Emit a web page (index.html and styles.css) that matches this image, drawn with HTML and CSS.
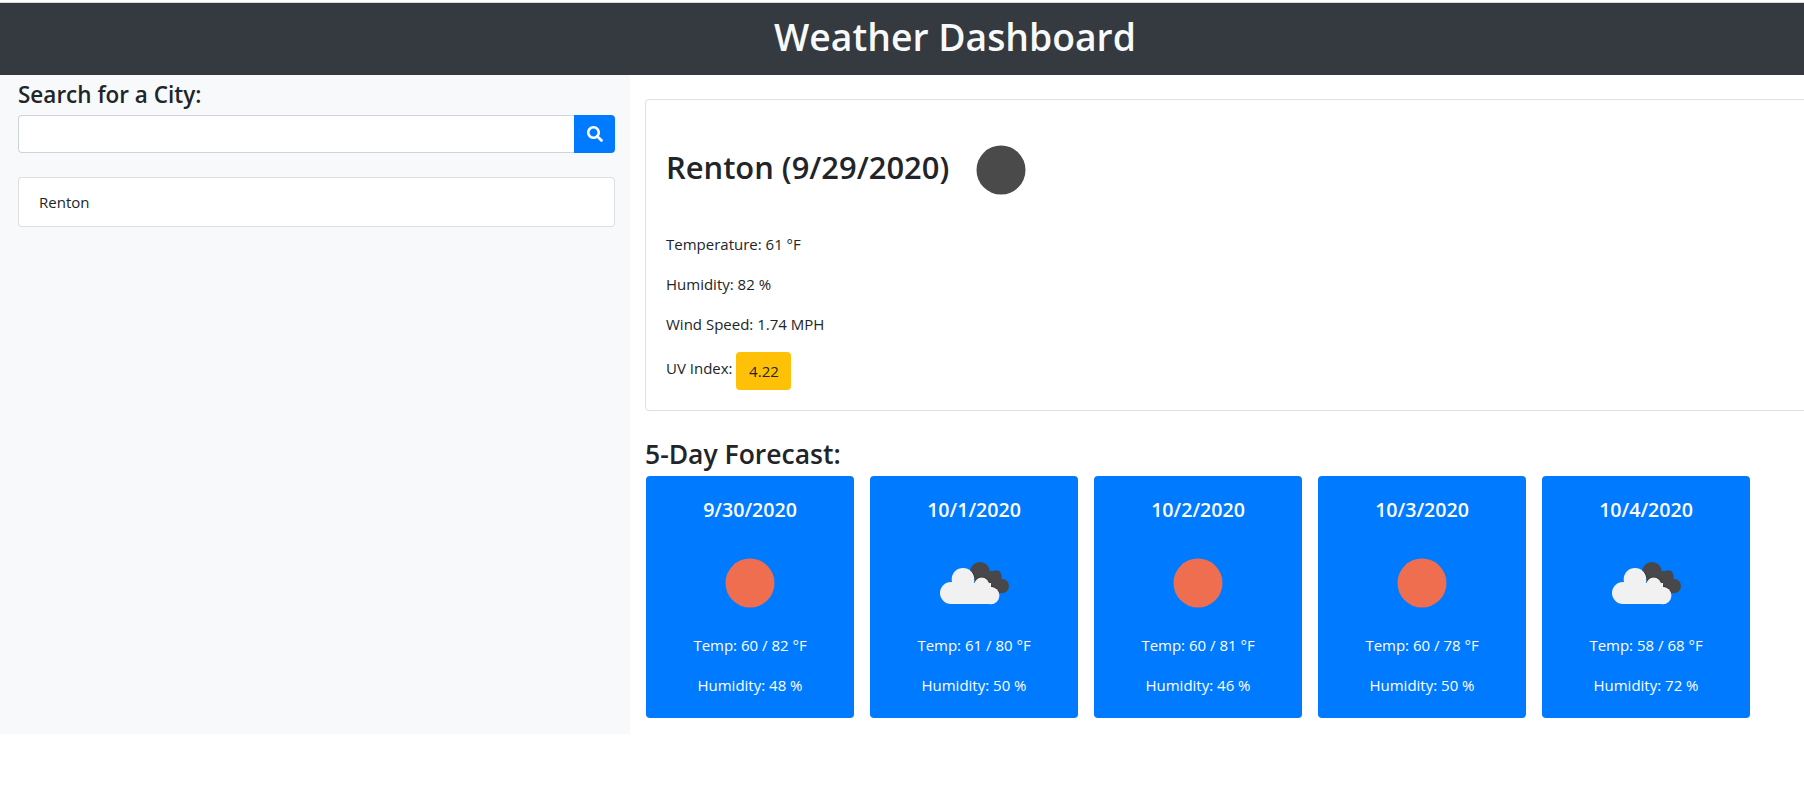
FILE: index.html
```html
<!DOCTYPE html>
<html lang="en">
<head>
<meta charset="utf-8">
<title>Weather Dashboard</title>
<link rel="stylesheet" href="styles.css">
</head>
<body>
<header class="banner"><h1 class="banner-title">Weather Dashboard</h1></header>
<div class="layout">
  <aside class="sidebar">
    <h2 class="search-title">Search for a City:</h2>
    <form class="search-group">
      <input class="search-input" type="text" aria-label="City">
      <button class="search-btn" type="button" aria-label="Search">
        <svg class="search-icon" viewBox="0 0 512 512"><path fill="#fff" d="M505 442.700L405.300 343c-4.500-4.500-10.600-7-17-7H372c27.600-35.300 44-79.700 44-128C416 93.100 322.900 0 208 0S0 93.100 0 208s93.100 208 208 208c48.300 0 92.700-16.400 128-44v16.300c0 6.400 2.500 12.500 7 17l99.700 99.700c9.400 9.400 24.600 9.400 33.900 0l28.300-28.300c9.400-9.400 9.400-24.600.1-34zM208 336c-70.700 0-128-57.200-128-128 0-70.700 57.200-128 128-128 70.700 0 128 57.200 128 128 0 70.700-57.200 128-128 128z"/></svg>
      </button>
    </form>
    <ul class="history"><li class="history-item">Renton</li></ul>
  </aside>
  <main class="content">
    <section class="current">
      <div class="current-head">
        <h2 class="current-title">Renton (9/29/2020)</h2>
        <svg class="current-icon" viewBox="0 0 100 100"><circle cx="50" cy="50" r="24.500" fill="#4a4a4a"/></svg>
      </div>
      <p class="stat">Temperature: 61 °F</p>
      <p class="stat">Humidity: 82 %</p>
      <p class="stat">Wind Speed: 1.74 MPH</p>
      <p class="stat stat-uv"><span class="uv-label">UV Index: </span><span class="uv-badge">4.22</span></p>
    </section>
    <h3 class="forecast-title">5-Day Forecast:</h3>
    <div class="forecast">
      <article class="day">
        <h5 class="day-date">9/30/2020</h5>
        <svg class="day-icon" viewBox="0 0 100 100"><circle cx="50" cy="50" r="24.500" fill="#ee6e4f"/></svg>
        <p class="day-text">Temp: 60 / 82 °F</p>
        <p class="day-text">Humidity: 48 %</p>
      </article>
      <article class="day">
        <h5 class="day-date">10/1/2020</h5>
        <svg class="day-icon" viewBox="0 0 100 100"><use href="#cloud"/></svg>
        <p class="day-text">Temp: 61 / 80 °F</p>
        <p class="day-text">Humidity: 50 %</p>
      </article>
      <article class="day">
        <h5 class="day-date">10/2/2020</h5>
        <svg class="day-icon" viewBox="0 0 100 100"><circle cx="50" cy="50" r="24.500" fill="#ee6e4f"/></svg>
        <p class="day-text">Temp: 60 / 81 °F</p>
        <p class="day-text">Humidity: 46 %</p>
      </article>
      <article class="day">
        <h5 class="day-date">10/3/2020</h5>
        <svg class="day-icon" viewBox="0 0 100 100"><circle cx="50" cy="50" r="24.500" fill="#ee6e4f"/></svg>
        <p class="day-text">Temp: 60 / 78 °F</p>
        <p class="day-text">Humidity: 50 %</p>
      </article>
      <article class="day">
        <h5 class="day-date">10/4/2020</h5>
        <svg class="day-icon" viewBox="0 0 100 100"><use href="#cloud"/></svg>
        <p class="day-text">Temp: 58 / 68 °F</p>
        <p class="day-text">Humidity: 72 %</p>
      </article>
    </div>
  </main>
</div>
<svg class="defs" width="0" height="0" aria-hidden="true">
  <defs>
    <clipPath id="cloud-back">
      <circle cx="56" cy="39" r="10"/>
      <circle cx="71.500" cy="43.500" r="6.300"/>
      <circle cx="77.700" cy="53" r="7.300"/>
      <rect x="52" y="38" width="24" height="18"/>
    </clipPath>
    <g id="cloud">
      <g fill="#48484a">
        <circle cx="56" cy="39" r="10"/>
        <circle cx="71.500" cy="43.500" r="6.300"/>
        <circle cx="77.700" cy="53" r="7.300"/>
        <rect x="52" y="38" width="24" height="18"/>
      </g>
      <g fill="#2e2e33" clip-path="url(#cloud-back)">
        <circle cx="57.700" cy="52" r="8.200"/>
        <circle cx="39" cy="46.300" r="12"/>
        <circle cx="66.700" cy="62.500" r="9.400"/>
      </g>
      <g fill="#f1f1f1">
        <circle cx="39" cy="46.300" r="11.300"/>
        <circle cx="27" cy="60" r="11"/>
        <circle cx="57.700" cy="52" r="7.500"/>
        <circle cx="66.700" cy="62.500" r="8.700"/>
        <rect x="27" y="50" width="40" height="21"/>
      </g>
    </g>
  </defs>
</svg>
</body>
</html>
```
FILE: styles.css
```css
* { box-sizing: border-box; }
html, body { margin: 0; padding: 0; overflow: hidden; }
body {
  width: 1804px;
  height: 793px;
  background: #fff;
  color: #212529;
  font-family: "Open Sans", "Noto Sans", sans-serif;
  font-size: 15px;
  padding-top: 2px;
}
.banner {
  height: 73px;
  border-top: 1px solid #d9d9d9;
  background: #343a40;
  display: flex;
  align-items: center;
  justify-content: center;
  padding: 0 0 3px 106px;
}
.banner-title { margin: 0; color: #f8f9fa; font-size: 37.300px; font-weight: 600; line-height: 1.2; }
.layout { display: flex; align-items: flex-start; }
.sidebar {
  flex: 0 0 630px;
  height: 659px;
  background: #f8f9fa;
  padding: 7px 15px 0 18px;
}
.search-title { margin: 0 0 7px; font-size: 22.500px; font-weight: 600; line-height: 26px; }
.search-group { display: flex; height: 38px; }
.search-input {
  flex: 1;
  min-width: 0;
  border: 1px solid #ced4da;
  border-right: 0;
  border-radius: 4px 0 0 4px;
  background: #fff;
}
.search-btn {
  width: 41px;
  border: 0;
  padding: 0;
  background: #007bff;
  border-radius: 0 4px 4px 0;
  display: flex;
  align-items: center;
  justify-content: center;
}
.search-icon { width: 16px; height: 16px; }
.history {
  list-style: none;
  margin: 24px 0 0;
  padding: 0;
  background: #fff;
  border: 1px solid rgba(0,0,0,.125);
  border-radius: 4px;
}
.history-item { padding: 12px 20px; height: 48px; line-height: 24px; }
.content { flex: 0 0 auto; width: 1174px; padding: 24px 0 0 15px; overflow: hidden; }
.current {
  width: 1300px;
  height: 312px;
  padding: 20px;
  border: 1px solid rgba(0,0,0,.125);
  border-radius: 4px;
}
.current-head { display: flex; align-items: center; height: 100px; margin-bottom: 12px; }
.current-title { margin: 0 2px 0 0; padding-bottom: 7px; font-size: 30.900px; font-weight: 600; line-height: 36px; }
.current-icon { width: 100px; height: 100px; }
.stat { margin: 0 0 16px; line-height: 24px; height: 24px; }
.stat-uv { height: 38px; margin: 0; display: flex; align-items: flex-start; white-space: pre; }
.uv-label { line-height: 33px; }
.uv-badge {
  background: #ffc107;
  width: 55px;
  height: 38px;
  line-height: 38px;
  text-align: center;
  border-radius: 4px;
}
.forecast-title { margin: 27px 0 6px; font-size: 26.500px; font-weight: 600; line-height: 32px; }
.forecast { display: flex; gap: 16px; margin-left: 1px; }
.day {
  flex: 0 0 208px;
  height: 242px;
  background: #007bff;
  color: #fff;
  border-radius: 4px;
  text-align: center;
  padding: 22px 0 0;
}
.day-date { margin: 0; font-size: 19.600px; font-weight: 600; line-height: 24px; }
.day-icon { display: block; width: 100px; height: 100px; margin: 11px auto 0; }
.day-text { margin: 0 0 16px; line-height: 24px; }
.defs { position: absolute; }
```
